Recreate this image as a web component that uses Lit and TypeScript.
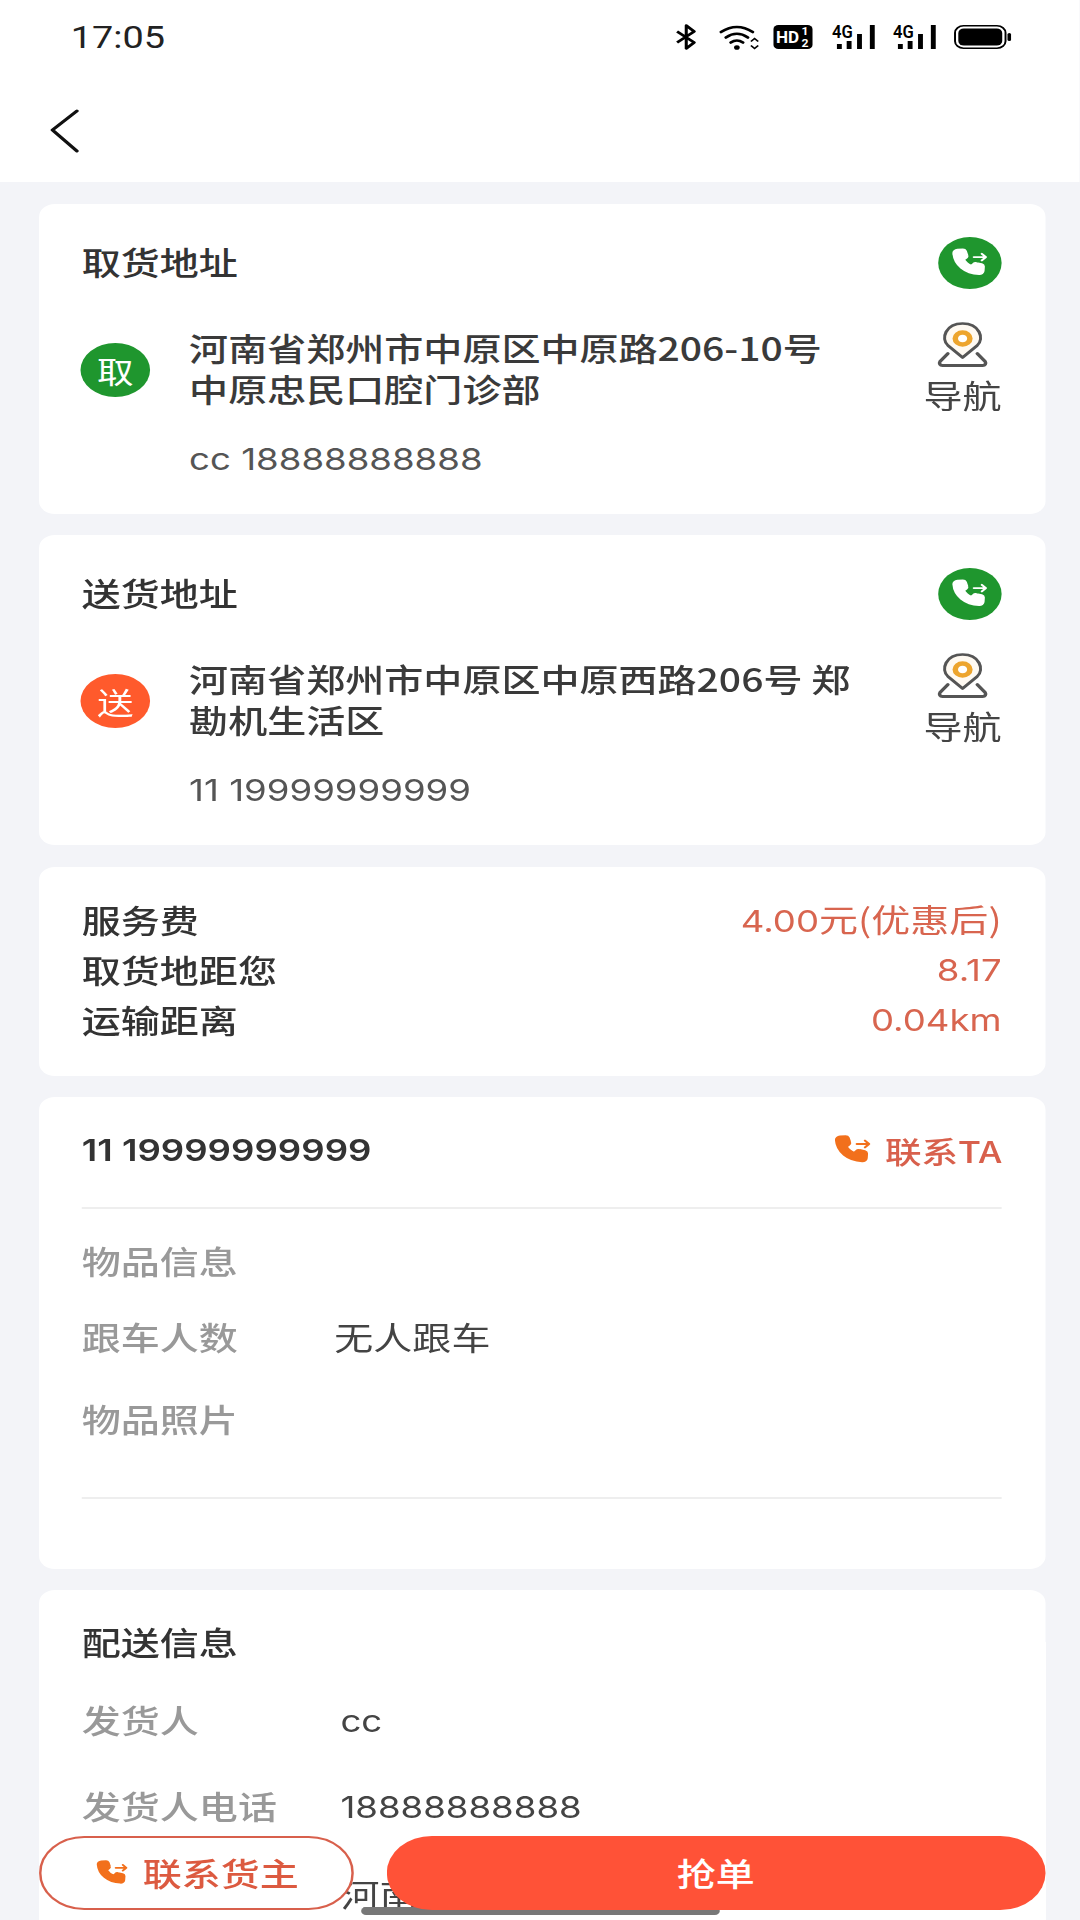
import { LitElement, html, css, svg } from "lit";
import { customElement } from "lit/decorators.js";

const handset = (c: string) => svg`
  <path fill=${c} stroke=${c} stroke-width="2.200" stroke-linejoin="round" d="M5.2 2.2 8.600 2c.7 0 1.200.4 1.400 1l.9 3.200c.2.6 0 1.200-.5 1.600L8.800 9.400c1 2.200 2.800 4 5.200 5.200l1.500-1.700c.4-.5 1-.7 1.600-.5l3.200.9c.6.200 1 .8 1 1.400l-.2 3.400c-.1 1.200-1.100 2.100-2.300 2C10 19.600 3.600 13.200 3.100 4.500c-.1-1.200.9-2.200 2.100-2.300z"/>`;

const phoneArrow = (c: string, a: string) => html`<svg class="fill" viewBox="0 0 26 24">
  ${handset(c)}
  <path fill="none" stroke=${a} stroke-width="1.500" stroke-linecap="round" stroke-linejoin="round" d="M15.500 7.500h7.500M20.500 5l2.500 2.500-2.500 2.500"/>
</svg>`;

const pin = html`<svg class="pin" viewBox="0 0 42 46">
  <path fill="#fffaf2" stroke="#555" stroke-width="2.600" stroke-linejoin="round" d="M21 36 9 24C3 17 7 2 21 2s18 15 12 22z"/>
  <circle cx="21" cy="17" r="6" fill="#fff" stroke="#eda52e" stroke-width="4.500"/>
  <path fill="none" stroke="#555" stroke-width="2.800" stroke-linecap="round" stroke-linejoin="round" d="M9 32 2.500 40c-1 2 0 4 2 4h33c2 0 3-2 2-4L33 32"/>
</svg>`;

const signal = (x: number) => svg`
  <text x=${x} y="14" font-size="18" font-weight="600" textLength="17" lengthAdjust="spacingAndGlyphs" font-family="Roboto, sans-serif" fill="#000">4G</text>
  <rect x=${x + 4} y="20" width="4" height="5" fill="#000"/>
  <rect x=${x + 12} y="17" width="4" height="8" fill="#000"/>
  <rect x=${x + 20.500} y="10" width="4" height="15" fill="#000"/>
  <rect x=${x + 31} y="1" width="4" height="24" fill="#000"/>`;

const statusIcons = html`<svg class="strip" viewBox="0 -4 276 30">
  <path fill="none" stroke="#000" stroke-width="2.500" stroke-linejoin="round" d="M2 7.500 16 18.500 9.500 24.500V1.500L16 7.500 2 18.500"/>
  <g fill="none" stroke="#000" stroke-width="2.600" stroke-linecap="round">
    <path d="M38 8Q51-2 64 8"/><path d="M42 13.500Q51 6 60 13.500"/><path d="M46 18.500Q51 14.500 56 18.500"/>
  </g>
  <circle cx="51" cy="23.500" r="2.300" fill="#000"/>
  <path fill="none" stroke="#000" stroke-width="1.500" d="M62.500 17.500l3-3 3 3M62.500 21.500l3 3 3-3"/>
  <rect x="81" y="1" width="32" height="24" rx="4" fill="#000"/>
  <text x="83" y="19.500" font-size="17" font-weight="700" textLength="19" lengthAdjust="spacingAndGlyphs" font-family="Roboto, sans-serif" fill="#fff">HD</text>
  <text x="104" y="11" font-size="10" font-weight="700" font-family="Roboto, sans-serif" fill="#fff">1</text>
  <text x="104" y="23" font-size="10" font-weight="700" font-family="Roboto, sans-serif" fill="#fff">2</text>
  ${signal(129)}${signal(179)}
  <rect x="229.800" y="1.800" width="41.400" height="22.400" rx="7" fill="none" stroke="#000" stroke-width="1.600"/>
  <rect x="232.500" y="4.500" width="36" height="17" rx="4.500" fill="#000"/>
  <rect x="272.800" y="9" width="3" height="8" rx="1.500" fill="#000"/>
</svg>`;

@customElement("app-root")
export class AppRoot extends LitElement {
  static styles = css`
    :host {
      display: block;
      width: 1080px;
      height: 1920px;
      overflow: hidden;
      background: #f3f4f8;
      font-family: "Noto Sans CJK SC", "Noto Sans", sans-serif;
      color: #333;
      font-size: 32px;
      line-height: 42px;
    }
    /* The reference is stretched horizontally as a whole: everything is laid out and then widened. */
    .stage {
      position: relative;
      width: 885.25px;
      height: 1920px;
      overflow: hidden;
      transform: scaleX(1.22);
      transform-origin: 0 0;
    }
    .num { font-family: Inter, sans-serif; font-size: 30px; }
    .top {
      height: 182px;
      background: #fff;
      display: flex;
      flex-direction: column;
    }
    .status {
      height: 74px;
      padding: 0 56px 0 58px;
      display: flex;
      justify-content: space-between;
      align-items: center;
      font-family: Roboto, sans-serif;
      font-size: 31px;
      color: #222;
    }
    .status span { padding-top: 2px; }
    .strip { width: 276px; height: 30px; margin-top: -4px; }
    .nav { flex: 1; display: flex; align-items: flex-start; padding: 35px 0 0 41px; }
    .back { width: 24px; height: 44px; }
    .list {
      display: flex;
      flex-direction: column;
      gap: 21.300px;
      padding: 22px 28.750px 0 32px;
    }
    .card { background: #fff; border-radius: 13px; padding: 0 35.500px 0 35px; }
    .head {
      padding-top: 33px;
      height: 85px;
      box-sizing: border-box;
      display: flex;
      justify-content: space-between;
      align-items: center;
    }
    .title { font-weight: 500; }
    .head .title { padding-bottom: 4px; }
    .call {
      width: 52px;
      height: 52px;
      border-radius: 50%;
      background: #1f962e;
      display: flex;
      align-items: center;
      justify-content: center;
    }
    .call svg { width: 34px; height: 32px; }
    .body { display: flex; justify-content: space-between; padding: 33px 0 34px; }
    .addr-row { display: flex; align-items: center; gap: 32px; margin-top: 5px; }
    .addr { font-weight: 500; line-height: 41px; white-space: nowrap; color: #3a3a3a; }
    .badge {
      width: 57px;
      height: 54px;
      margin-top: 4px;
      border-radius: 50%;
      flex: none;
      display: flex;
      align-items: center;
      justify-content: center;
      color: #fff;
      font-size: 30px;
      margin-left: -1px;
    }
    .green { background: #1f962e; }
    .orange { background: #ff5a2c; }
    .person { margin: 29px 0 0 88px; color: #555; }
    .side { display: flex; flex-direction: column; align-items: center; width: 60px; color: #444; margin: -1px 2px 0 0; }
    .pin { width: 42px; height: 47px; }
    .side span { margin-top: 5px; white-space: nowrap; }
    .fees { padding-top: 27px; padding-bottom: 32px; }
    .fee { display: flex; justify-content: space-between; align-items: center; height: 50px; }
    .fee b { font-weight: 500; }
    .fee > span { color: #d8654f; padding-top: 1px; }
    .fee > .num { padding-top: 3px; }
    .owner {
      height: 112px;
      border-bottom: 2px solid #eee;
      box-sizing: border-box;
      display: flex;
      justify-content: space-between;
      align-items: center;
      padding-bottom: 3px;
      font-weight: 500;
    }
    .owner .num { font-weight: 600; }
    .contact { display: flex; align-items: center; gap: 8px; color: #d8604c; font-size: 30px; margin-top: -1px; }
    .contact svg { width: 36px; height: 32px; }
    .info { padding: 30px 0 70px; }
    .goods { display: flex; flex-direction: column; gap: 34px; padding-bottom: 58px; border-bottom: 2px solid #eee; }
    .goods .row:last-child { margin-top: 6px; }
    .row { display: flex; }
    .label { color: #999; font-weight: 500; flex: none; }
    .goods .label { width: 207px; }
    .val { color: #444; }
    .val.num { padding-top: 3px; }
    .ship { padding-top: 30px; }
    .ship-title { margin-bottom: 14px; }
    .ship .row { height: 86px; align-items: center; }
    .ship .label { width: 212px; }
    .ship .row.last { margin-top: 2px; }
    .bar {
      position: absolute;
      left: 32px;
      right: 28.750px;
      top: 1836px;
      height: 74px;
      display: flex;
      justify-content: space-between;
      font-weight: 500;
    }
    .btn-contact {
      position: relative;
      z-index: 2;
      width: 258px;
      box-sizing: border-box;
      border: 2px solid #d8604c;
      border-radius: 37px;
      background: #fff;
      color: #dc5a40;
      display: flex;
      align-items: center;
      justify-content: center;
      gap: 10px;
      padding-bottom: 2px;
    }
    .btn-contact svg { width: 30px; height: 28px; margin-top: 2px; }
    .btn-grab {
      position: relative;
      z-index: 2;
      width: 539.500px;
      border-radius: 37px;
      background: #ff5237;
      color: #fff;
      display: flex;
      align-items: center;
      justify-content: center;
      padding-bottom: 2px;
      box-sizing: border-box;
    }
    .home {
      position: absolute;
      z-index: 1;
      left: 296px;
      width: 294px;
      top: 1907px;
      height: 8px;
      border-radius: 4px;
      background: #777;
    }
  `;

  private address(title: string, badge: string, cls: string, lines: unknown, who: string) {
    return html`<section class="card">
      <div class="head">
        <span class="title">${title}</span>
        <div class="call">${phoneArrow("#fff", "#fff")}</div>
      </div>
      <div class="body">
        <div>
          <div class="addr-row">
            <div class="badge ${cls}">${badge}</div>
            <div class="addr">${lines}</div>
          </div>
          <div class="person num">${who}</div>
        </div>
        <div class="side">${pin}<span>导航</span></div>
      </div>
    </section>`;
  }

  render() {
    return html`<div class="stage">
      <header class="top">
        <div class="status"><span>17:05</span>${statusIcons}</div>
        <div class="nav">
          <svg class="back" viewBox="0 0 24 44">
            <path fill="none" stroke="#111" stroke-width="3" stroke-linecap="round" stroke-linejoin="round" d="M22 2 2 21l20 21"/>
          </svg>
        </div>
      </header>
      <div class="list">
        ${this.address("取货地址", "取", "green", html`河南省郑州市中原区中原路206-10号<br />中原忠民口腔门诊部`, "cc 18888888888")}
        ${this.address("送货地址", "送", "orange", html`河南省郑州市中原区中原西路206号 郑<br />勘机生活区`, "11 19999999999")}
        <section class="card fees">
          <div class="fee"><b>服务费</b><span><span class="num">4.00</span>元(优惠后)</span></div>
          <div class="fee"><b>取货地距您</b><span class="num">8.17</span></div>
          <div class="fee"><b>运输距离</b><span class="num">0.04km</span></div>
        </section>
        <section class="card">
          <div class="owner">
            <span class="num">11 19999999999</span>
            <span class="contact">${phoneArrow("#f2701c", "#f2701c")}联系TA</span>
          </div>
          <div class="info">
            <div class="goods">
              <div class="row"><span class="label">物品信息</span></div>
              <div class="row"><span class="label">跟车人数</span><span class="val">无人跟车</span></div>
              <div class="row"><span class="label">物品照片</span></div>
            </div>
          </div>
        </section>
        <section class="card ship">
          <div class="title ship-title">配送信息</div>
          <div class="row"><span class="label">发货人</span><span class="val num">cc</span></div>
          <div class="row"><span class="label">发货人电话</span><span class="val num">18888888888</span></div>
          <div class="row last"><span class="label"></span><span class="val">河南省</span></div>
        </section>
      </div>
      <div class="home"></div>
      <div class="bar">
        <div class="btn-contact">${phoneArrow("#f2701c", "#f2701c")}<span>联系货主</span></div>
        <div class="btn-grab">抢单</div>
      </div>
    </div>`;
  }
}
